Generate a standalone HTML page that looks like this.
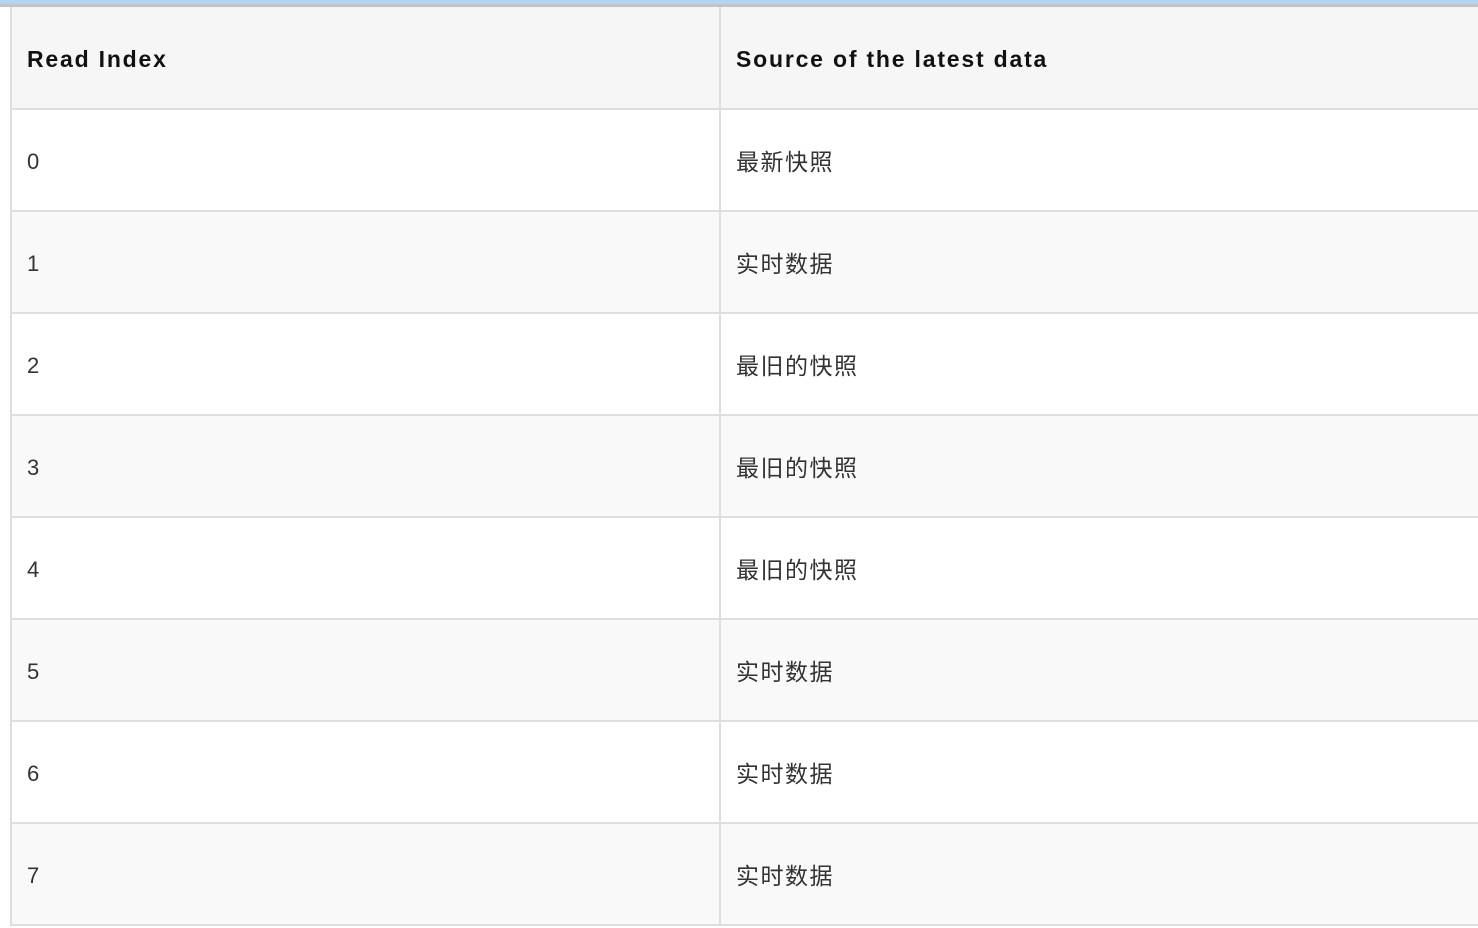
<!DOCTYPE html>
<html><head><meta charset="utf-8"><style>
body{margin:0;width:1478px;height:928px;overflow:hidden;background:#fff;font-family:"Liberation Sans","Noto Sans CJK SC",sans-serif;position:relative}
.top{position:absolute;left:0;top:0;width:1478px;height:4px;background:#b5d3f3}
.top2{position:absolute;left:0;top:4px;width:1478px;height:3px;background:#c4c4c4}
table{position:absolute;left:10px;top:7px;border-collapse:collapse;width:1480px;table-layout:fixed}
td,th{border:2px solid #dedede;height:102px;box-sizing:border-box;padding:0 0 0 15px;text-align:left;font-size:22px;color:#333;vertical-align:middle}
td{padding-top:4px}
td.c{font-size:23px;letter-spacing:1.5px;padding-top:0}
th{background:#f6f6f6;color:#111;font-weight:bold;letter-spacing:1.8px;font-size:23px;border-top:none;height:102px;padding-top:4px}
tr:nth-child(odd) td{background:#f9f9f9}
col.a{width:709px}
</style></head><body>
<div class="top"></div><div class="top2"></div>
<table><colgroup><col class="a"><col></colgroup>
<tr><th>Read Index</th><th>Source of the latest data</th></tr>
<tr><td>0</td><td class="c">最新快照</td></tr>
<tr><td>1</td><td class="c">实时数据</td></tr>
<tr><td>2</td><td class="c">最旧的快照</td></tr>
<tr><td>3</td><td class="c">最旧的快照</td></tr>
<tr><td>4</td><td class="c">最旧的快照</td></tr>
<tr><td>5</td><td class="c">实时数据</td></tr>
<tr><td>6</td><td class="c">实时数据</td></tr>
<tr><td>7</td><td class="c">实时数据</td></tr>
</table>
</body></html>
